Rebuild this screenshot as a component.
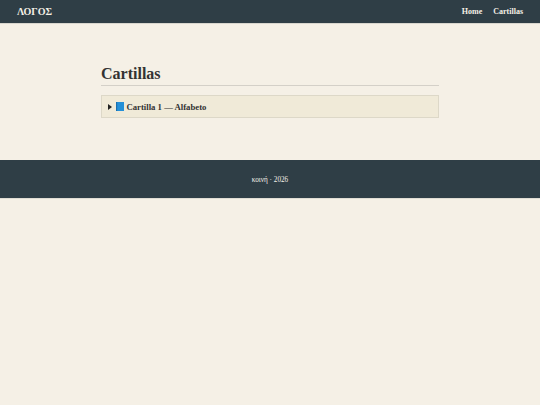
<style>
:global(body) { margin: 0; background: #f5f0e6; }
.page { font-family: "Liberation Serif", Georgia, serif; color: #333; }
.top { height: 24px; background: #2f3e46; border-bottom: 1px solid #d8d6ce; display: flex; align-items: center; justify-content: space-between; padding: 0 17px 1px; box-sizing: border-box; }
.logo { color: #f5f0e6; font-weight: 700; font-size: 10px; }
nav { display: flex; gap: 11px; }
nav a { color: #f5f0e6; font-weight: 700; font-size: 8px; text-decoration: none; }
main { width: 338px; margin: 0 auto; padding: 41px 0 42px; }
h1 { margin: 0 0 9px; padding-bottom: 2px; font-size: 16px; line-height: 18px; font-weight: 700; color: #333; border-bottom: 1px solid #d4d0c8; }
details { background: #f0ead8; border: 1px solid #ddd8c8; }
summary { display: flex; align-items: center; height: 21px; padding: 0 6px; font-size: 8.7px; font-weight: 700; cursor: pointer; list-style: none; }
.tri { width: 0; height: 0; border-left: 4.5px solid #222; border-top: 3px solid transparent; border-bottom: 3px solid transparent; margin-right: 3.5px; }
.book { margin-right: 3px; }
footer { height: 39px; padding-top: 2px; background: #2f3e46; border-bottom: 1px solid #e0ddd4; box-sizing: border-box; display: flex; align-items: center; justify-content: center; color: #f5f0e6; font-size: 7.2px; }
</style>

<div class="page">
  <header class="top">
    <span class="logo">ΛΟΓΟΣ</span>
    <nav><a href="#home">Home</a><a href="#cartillas">Cartillas</a></nav>
  </header>
  <main>
    <h1>Cartillas</h1>
    <details>
      <summary>
        <span class="tri"></span>
        <svg class="book" width="8" height="9" viewBox="0 0 8 9"><rect width="8" height="9" fill="#2590d8"/><rect width="1.2" height="9" fill="#1a6fae"/></svg>
        <span>Cartilla 1 — Alfabeto</span>
      </summary>
    </details>
  </main>
  <footer>κοινή · 2026</footer>
</div>
